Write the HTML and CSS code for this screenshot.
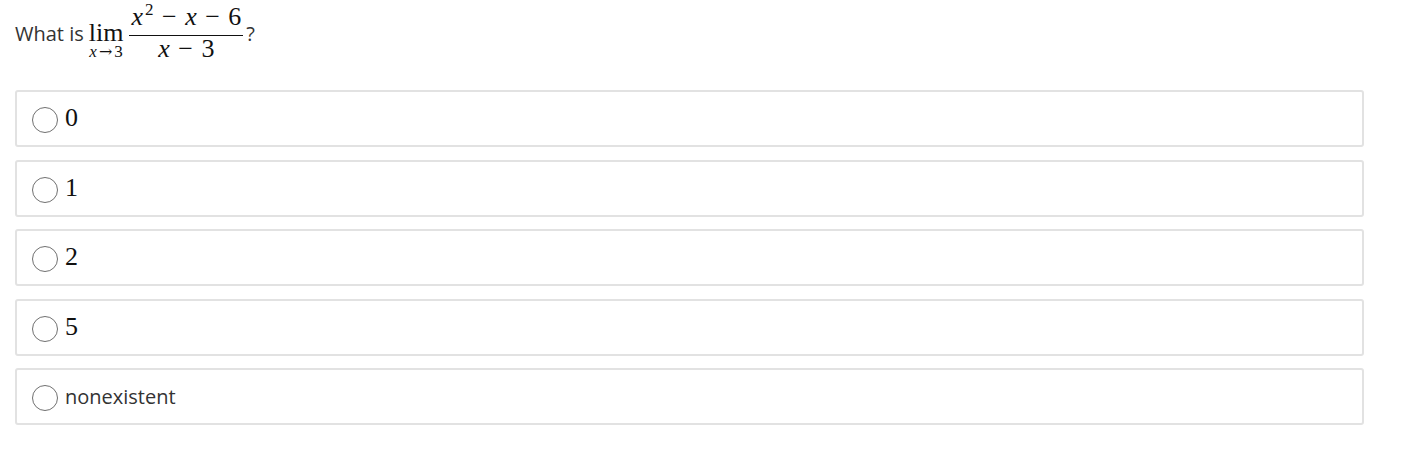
FILE: index.html
```html
<!DOCTYPE html>
<html>
<head>
<meta charset="utf-8">
<link rel="stylesheet" href="styles.css">
</head>
<body>
<div class="quiz">
  <div class="question">
    <span class="q-text">What is</span>
    <span class="lim">
      <span class="lim-word">lim</span>
      <span class="lim-sub"><i>x</i><span class="arrow">→</span>3</span>
    </span>
    <span class="frac">
      <span class="num"><i>x</i><sup>2</sup><span class="op">−</span><i>x</i><span class="op">−</span>6</span>
      <span class="bar"></span>
      <span class="den"><i>x</i><span class="op">−</span>3</span>
    </span>
    <span class="q-end">?</span>
  </div>
  <div class="options">
    <label class="option"><span class="radio"></span><span class="opt-math">0</span></label>
    <label class="option"><span class="radio"></span><span class="opt-math">1</span></label>
    <label class="option"><span class="radio"></span><span class="opt-math">2</span></label>
    <label class="option"><span class="radio"></span><span class="opt-math">5</span></label>
    <label class="option"><span class="radio"></span><span class="opt-text">nonexistent</span></label>
  </div>
</div>
</body>
</html>
```
FILE: styles.css
```css
html, body {
  margin: 0;
  padding: 0;
  background: #ffffff;
}
body {
  font-family: "Open Sans", "Liberation Sans", sans-serif;
  color: #333333;
}
.quiz {
  padding: 0 58px 0 15px;
}
.question {
  display: flex;
  align-items: flex-start;
  height: 90px;
}
.q-text {
  font-size: 20px;
  line-height: 28px;
  margin-top: 20px;
  margin-right: 5px;
}
.lim,
.frac {
  font-family: "Liberation Serif", "DejaVu Serif", serif;
  color: #111111;
  font-size: 26px;
  line-height: 28px;
}
.lim i,
.frac i {
  font-style: italic;
}
.lim {
  display: flex;
  flex-direction: column;
  align-items: center;
  margin-top: 21px;
  margin-right: 6px;
}
.lim-word {
  line-height: 24px;
}
.lim-sub {
  font-size: 17px;
  line-height: 14px;
  white-space: nowrap;
}
.arrow {
  font-family: "DejaVu Serif", serif;
  font-size: 16px;
  margin: 0 2px;
}
.frac {
  display: flex;
  flex-direction: column;
  align-items: center;
  margin-top: 3px;
}
.num,
.den {
  line-height: 28px;
  white-space: nowrap;
  padding: 0 2px;
}
.num sup {
  font-size: 17px;
  vertical-align: 10px;
  line-height: 0;
  margin-left: 2px;
}
.op {
  margin: 0 8.5px;
}
.bar {
  align-self: stretch;
  height: 1px;
  background: #111111;
  margin-top: 4px;
}
.den {
  margin-top: -1px;
}
.q-end {
  font-size: 20px;
  line-height: 28px;
  margin-top: 20px;
  margin-left: 3px;
}
.options {
  display: flex;
  flex-direction: column;
  gap: 12.5px;
}
.option {
  display: flex;
  align-items: center;
  height: 57px;
  box-sizing: border-box;
  border: 2px solid #e2e2e2;
  border-radius: 3px;
  padding: 3px 15px 0;
}
.radio {
  width: 24px;
  height: 24px;
  border: 1px solid #707070;
  border-radius: 50%;
  flex: none;
  margin-right: 7px;
}
.opt-math {
  font-family: "Liberation Serif", "DejaVu Serif", serif;
  font-size: 26px;
  line-height: 28px;
  color: #111111;
  margin-top: -4px;
}
.opt-text {
  font-size: 20px;
  line-height: 28px;
  color: #333333;
  margin-top: -2px;
}
```
